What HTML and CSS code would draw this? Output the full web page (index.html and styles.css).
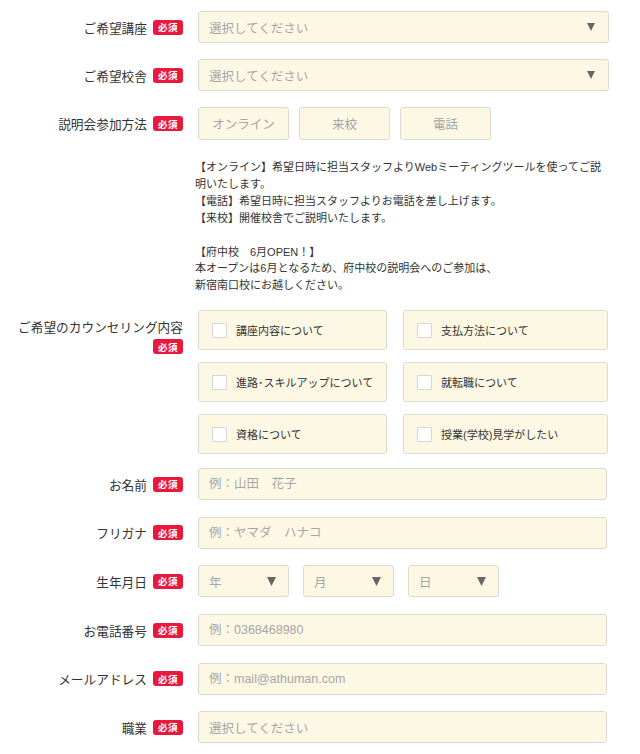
FILE: index.html
```html
<!DOCTYPE html>
<html lang="ja">
<head>
<meta charset="utf-8">
<link rel="stylesheet" href="styles.css">
</head>
<body>
<form class="form">
  <div class="row">
    <div class="label"><span>ご希望講座</span><span class="req">必須</span></div>
    <div class="select wide"><span class="ph">選択してください</span><svg class="arrow" viewBox="0 0 8 8"><polygon points="0,0 8,0 4,8"/></svg></div>
  </div>
  <div class="row">
    <div class="label"><span>ご希望校舎</span><span class="req">必須</span></div>
    <div class="select wide"><span class="ph">選択してください</span><svg class="arrow" viewBox="0 0 8 8"><polygon points="0,0 8,0 4,8"/></svg></div>
  </div>
  <div class="row">
    <div class="label"><span>説明会参加方法</span><span class="req">必須</span></div>
    <div class="btns">
      <span class="btn">オンライン</span>
      <span class="btn">来校</span>
      <span class="btn">電話</span>
    </div>
  </div>
  <div class="row note-row">
    <div></div>
    <p class="note">【オンライン】希望日時に担当スタッフよりWebミーティングツールを使ってご説明いたします。<br>【電話】希望日時に担当スタッフよりお電話を差し上げます。<br>【来校】開催校舎でご説明いたします。<br><br>【府中校　6月OPEN！】<br>本オープンは6月となるため、府中校の説明会へのご参加は、<br>新宿南口校にお越しください。</p>
  </div>
  <div class="row top">
    <div class="label stack"><span class="stack-text">ご希望のカウンセリング内容</span><span class="req">必須</span></div>
    <div class="checks">
      <label class="check"><span class="box"></span>講座内容について</label>
      <label class="check"><span class="box"></span>支払方法について</label>
      <label class="check"><span class="box"></span>進路･スキルアップについて</label>
      <label class="check"><span class="box"></span>就転職について</label>
      <label class="check"><span class="box"></span>資格について</label>
      <label class="check"><span class="box"></span>授業(学校)見学がしたい</label>
    </div>
  </div>
  <div class="row after-checks">
    <div class="label"><span>お名前</span><span class="req">必須</span></div>
    <input class="text" type="text" placeholder="例：山田　花子">
  </div>
  <div class="row">
    <div class="label"><span>フリガナ</span><span class="req">必須</span></div>
    <input class="text" type="text" placeholder="例：ヤマダ　ハナコ">
  </div>
  <div class="row">
    <div class="label"><span>生年月日</span><span class="req">必須</span></div>
    <div class="dates">
      <div class="select small"><span class="ph">年</span><svg class="arrow big" viewBox="0 0 8 8"><polygon points="0,0 8,0 4,8"/></svg></div>
      <div class="select small"><span class="ph">月</span><svg class="arrow big" viewBox="0 0 8 8"><polygon points="0,0 8,0 4,8"/></svg></div>
      <div class="select small"><span class="ph">日</span><svg class="arrow big" viewBox="0 0 8 8"><polygon points="0,0 8,0 4,8"/></svg></div>
    </div>
  </div>
  <div class="row">
    <div class="label"><span>お電話番号</span><span class="req">必須</span></div>
    <input class="text" type="text" placeholder="例：0368468980">
  </div>
  <div class="row">
    <div class="label"><span>メールアドレス</span><span class="req">必須</span></div>
    <input class="text" type="text" placeholder="例：mail@athuman.com">
  </div>
  <div class="row">
    <div class="label"><span>職業</span><span class="req">必須</span></div>
    <div class="select wide2"><span class="ph">選択してください</span></div>
  </div>
</form>
</body>
</html>
```
FILE: styles.css
```css
* { box-sizing: border-box; }
html, body { margin: 0; padding: 0; background: #fff; }
body {
  font-family: "Liberation Sans", "Noto Sans CJK JP", sans-serif;
  color: #333;
  width: 640px;
  height: 754px;
  overflow: hidden;
}
.form {
  padding: 11px 0 0 0;
  width: 609px;
  display: flex;
  flex-direction: column;
  gap: 16px;
}
.row {
  display: grid;
  grid-template-columns: 183px 411px;
  column-gap: 15px;
  align-items: center;
}
.row.top { align-items: start; }
.label {
  display: flex;
  justify-content: flex-end;
  align-items: center;
  gap: 6px;
  font-size: 12.7px;
  color: #333;
  white-space: nowrap;
}
.label.stack {
  flex-direction: column;
  align-items: flex-end;
  gap: 1px;
  padding-top: 9px;
}
.stack-text { line-height: 19px; }
.req {
  display: inline-flex;
  align-items: center;
  justify-content: center;
  width: 30px;
  height: 15px;
  background: #e8193c;
  color: #fff;
  font-size: 9.5px;
  font-weight: bold;
  border-radius: 3px;
  letter-spacing: 0.5px;
}
.select, .text, .btn, .check {
  background: #fdf8e4;
  border: 1px solid #dedad0;
  border-radius: 3px;
}
.select {
  position: relative;
  height: 32px;
  display: flex;
  align-items: center;
  padding-left: 10px;
}
.select.wide { width: 411px; }
.select.wide2 { width: 409px; }
.select.small { width: 91px; height: 32px; }
.ph {
  color: #a6a6a6;
  font-size: 12.5px;
}
.arrow {
  position: absolute;
  right: 13px;
  top: 50%;
  width: 8px;
  height: 8px;
  margin-top: -4px;
  fill: #666;
}
.arrow.big {
  right: 12px;
  width: 9px;
  height: 9px;
  margin-top: -4px;
}
.btns {
  display: flex;
  gap: 10px;
}
.btn {
  width: 91px;
  height: 33px;
  display: flex;
  align-items: center;
  justify-content: center;
  color: #a6a6a6;
  font-size: 12.5px;
}
.note-row { margin-top: 3px; }
.note {
  margin: 0 0 0 -3px;
  font-size: 11px;
  line-height: 16.9px;
  color: #333;
  width: 414px;
}
.checks {
  display: grid;
  grid-template-columns: 189px 205px;
  column-gap: 16px;
  row-gap: 12px;
}
.check {
  height: 40px;
  display: flex;
  align-items: center;
  padding-left: 13px;
  font-size: 11px;
  color: #333;
  gap: 9px;
}
.box {
  width: 15px;
  height: 15px;
  background: #fff;
  border: 1px solid #d6d6d6;
  border-radius: 1px;
  flex: none;
}
.after-checks { margin-top: -2px; }
.text {
  width: 409px;
  height: 32px;
  padding: 0 10px;
  font-family: inherit;
  font-size: 12.5px;
  color: #333;
  margin: 0;
  outline: none;
}
.text::placeholder { color: #a6a6a6; }
.dates {
  display: flex;
  gap: 14px;
}
.form > .row:nth-child(n+7) { margin-top: 0.6px; }
```
